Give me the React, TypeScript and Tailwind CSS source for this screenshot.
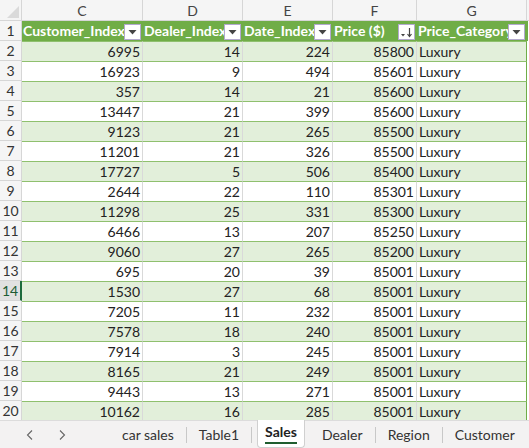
import React from "react";

const rows: [number, number, number, number][] = [
  [6995, 14, 224, 85800],
  [16923, 9, 494, 85601],
  [357, 14, 21, 85600],
  [13447, 21, 399, 85600],
  [9123, 21, 265, 85500],
  [11201, 21, 326, 85500],
  [17727, 5, 506, 85400],
  [2644, 22, 110, 85301],
  [11298, 25, 331, 85300],
  [6466, 13, 207, 85250],
  [9060, 27, 265, 85200],
  [695, 20, 39, 85001],
  [1530, 27, 68, 85001],
  [7205, 11, 232, 85001],
  [7578, 18, 240, 85001],
  [7914, 3, 245, 85001],
  [8165, 21, 249, 85001],
  [9443, 13, 271, 85001],
  [10162, 16, 285, 85001],
];

const widths = ["w-[121px]", "w-[100px]", "w-[90px]", "w-[84px]", "w-[110px]"];

function FilterButton({ sorted }: { sorted?: boolean }) {
  return (
    <div className="absolute right-[1px] top-[3px] w-[17px] h-[16px] bg-white border border-[#b3a9cf] flex items-center justify-center">
      {sorted ? (
        <svg width="13" height="12" viewBox="0 0 13 12">
          <path d="M1 8 L5 8 L3 10.5 Z" fill="#444" />
          <path d="M9.5 2 L9.5 10 M7.5 8 L9.5 10.5 L11.5 8" stroke="#444" strokeWidth="1.2" fill="none" />
        </svg>
      ) : (
        <svg width="9" height="6" viewBox="0 0 9 6">
          <path d="M0.5 1 L8.5 1 L4.5 5.5 Z" fill="#444" />
        </svg>
      )}
    </div>
  );
}

export default function App() {
  const headers = ["Customer_Index", "Dealer_Index", "Date_Index", "Price ($)", "Price_Category"];
  return (
    <div className="w-[529px] h-[448px] overflow-hidden bg-white flex flex-col text-[#222]" style={{ fontFamily: "Lato, 'Liberation Sans', sans-serif" }}>
      {/* column letters */}
      <div className="flex h-[21px] bg-[#f5f5f5] border-b border-[#d6d6d6] shrink-0">
        <div className="w-[22px] border-r border-[#d6d6d6] relative">
          <svg className="absolute right-[2px] bottom-[2px]" width="12" height="12" viewBox="0 0 12 12">
            <path d="M12 0 L12 12 L0 12 Z" fill="#dadada" />
          </svg>
        </div>
        {["C", "D", "E", "F", "G"].map((l, i) => (
          <div key={l} className={`${widths[i]} border-r border-[#d6d6d6] flex items-center justify-center text-[14px] text-[#444]`}>
            {l}
          </div>
        ))}
        <div className="flex-1" />
      </div>

      <div className="flex-1 overflow-hidden">
        {/* table header row */}
        <div className="flex h-[20px]">
          <div className="w-[22px] bg-[#f5f5f5] border-r border-[#d6d6d6] border-b flex items-center justify-center text-[14px] text-[#333]">
            1
          </div>
          {headers.map((h, i) => (
            <div key={h} className={`${widths[i]} relative bg-[#70ad47] border-r border-[#70ad47] text-white font-bold text-[14px] leading-[20px] pl-[1px] overflow-hidden whitespace-nowrap`}>
              {h}
              <FilterButton sorted={i === 3} />
            </div>
          ))}
          <div className="flex-1 border-l border-[#70ad47]" />
        </div>

        {rows.map((r, idx) => {
          const n = idx + 2;
          const band = n % 2 === 0;
          const sel = n === 14;
          return (
            <div key={n} className="flex h-[20px]">
              <div
                className={`w-[22px] border-b border-[#d6d6d6] flex items-center justify-center text-[14px] ${
                  sel ? "bg-[#e1e1e1] border-r-2 border-r-[#1d6b3c] text-[#1e5c34]" : "bg-[#f5f5f5] border-r border-r-[#d6d6d6] text-[#333]"
                }`}
              >
                {n}
              </div>
              {[...r, "Luxury"].map((v, i) => (
                <div
                  key={i}
                  className={`${widths[i]} ${band ? "bg-[#e2efda]" : "bg-white"} border-t border-[#8fc06e] ${
                    i === 4 ? "border-r border-r-[#70ad47] text-left pl-[2px]" : "border-r border-r-[#d9d9d9] text-right pr-[2px]"
                  } text-[14px] leading-[19px] overflow-hidden whitespace-nowrap`}
                >
                  {v}
                </div>
              ))}
              <div className="flex-1 bg-white" />
            </div>
          );
        })}
      </div>

      {/* sheet tabs */}
      <div className="h-[28px] shrink-0 bg-[#f3f2f2] border-t border-[#dcdcdc] flex items-stretch text-[14px] text-[#333]">
        <div className="w-[110px] flex items-center pl-[24px] gap-[20px] text-[#666]">
          <svg width="12" height="12" viewBox="0 0 12 12">
            <path d="M8 1.5 L3.5 6 L8 10.5" stroke="#666" strokeWidth="1.1" fill="none" />
          </svg>
          <svg width="12" height="12" viewBox="0 0 12 12">
            <path d="M4 1.5 L8.5 6 L4 10.5" stroke="#666" strokeWidth="1.1" fill="none" />
          </svg>
        </div>
        <div className="flex items-center px-[12px]">car sales</div>
        <div className="self-center w-px h-[16px] bg-[#c8c8c8]" />
        <div className="flex items-center px-[12px]">Table1</div>
        <div className="self-center w-px h-[16px] bg-[#c8c8c8]" />
        <div className="mx-[5px] -mt-px bg-white border-x border-b border-[#d0d0d0] rounded-b-[4px] flex flex-col items-center justify-center px-[7px]">
          <span className="font-bold text-[#222] leading-[16px]">Sales</span>
          <span className="block h-[2px] w-full bg-[#1f5e2f] mt-[2px]" />
        </div>
        <div className="flex items-center px-[12px]">Dealer</div>
        <div className="self-center w-px h-[16px] bg-[#c8c8c8]" />
        <div className="flex items-center px-[12px]">Region</div>
        <div className="self-center w-px h-[16px] bg-[#c8c8c8]" />
        <div className="flex items-center px-[12px]">Customer</div>
      </div>
    </div>
  );
}
